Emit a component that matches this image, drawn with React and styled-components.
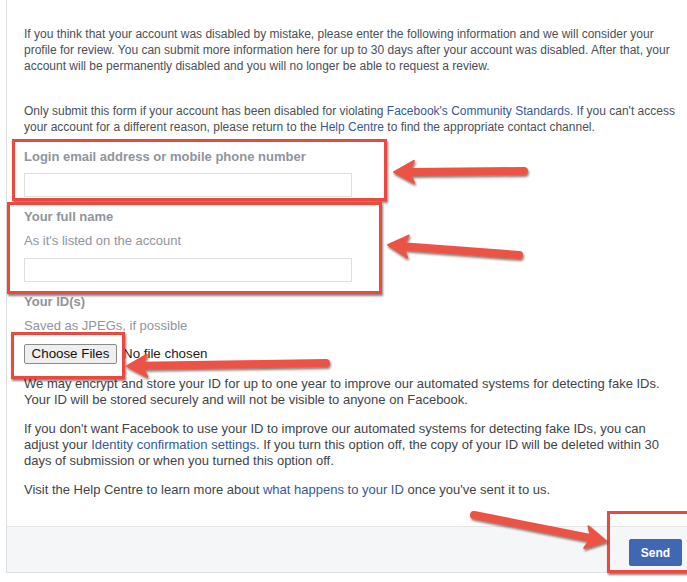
import React from 'react'
import styled, { createGlobalStyle } from 'styled-components'

const GlobalStyle = createGlobalStyle`
  html, body {
    margin: 0;
    padding: 0;
    background: #ffffff;
    overflow: hidden;
  }
  body {
    font-family: "Liberation Sans", Arial, sans-serif;
  }
`

const Page = styled.div`
  position: relative;
  width: 687px;
  height: 582px;
  overflow: hidden;
`

const Card = styled.div`
  margin-left: 6px;
  width: 720px;
  border-left: 1px solid #dddfe2;
  border-bottom: 1px solid #dddfe2;
  background: #fff;
`

const Body = styled.div`
  padding: 26px 17px 28px 17px;
  width: 660px;
  font-size: 12px;
  line-height: 16px;
  color: #4b4f56;
`

const Para = styled.p`
  margin: 0 0 ${p => p.$gap || 0}px 0;
  white-space: nowrap;
  font-size: ${p => p.$size || 12}px;
  color: ${p => (p.$size ? '#3f4349' : '#4b4f56')};
`

const Link = styled.a`
  color: #365899;
  text-decoration: none;
`

const Label = styled.div`
  font-size: 13px;
  font-weight: bold;
  color: #90949c;
  margin-top: ${p => p.$top || 0}px;
`

const Hint = styled.div`
  font-size: 13px;
  color: #90949c;
  margin-top: 8px;
`

const TextInput = styled.div`
  width: 326px;
  height: 22px;
  border: 1px solid #dddfe2;
  background: #fff;
  margin-top: ${p => p.$top || 8}px;
  margin-bottom: 12px;
`

const FileRow = styled.div`
  display: flex;
  align-items: center;
  gap: 6px;
  margin-top: 10px;
  margin-bottom: 12px;
  font-size: 13.33px;
  color: #1c1e21;
`

const FileButton = styled.div`
  height: 18px;
  width: 91px;
  border: 1px solid #8a8a8a;
  border-radius: 2px;
  background: #efefef;
  display: flex;
  align-items: center;
  justify-content: center;
  color: #111;
`

const Footer = styled.div`
  background: #f5f6f7;
  border-top: 1px solid #e5e5e5;
  padding: 12px 10px 6px 0;
  width: 675px;
  display: flex;
  justify-content: flex-end;
`

const SendButton = styled.div`
  width: 53px;
  height: 27px;
  background: #4267b2;
  border: 1px solid #4267b2;
  border-radius: 2px;
  color: #fff;
  font-size: 12px;
  font-weight: bold;
  display: flex;
  align-items: center;
  justify-content: center;
  box-sizing: border-box;
`

const RedBox = styled.div`
  position: absolute;
  left: ${p => p.$x}px;
  top: ${p => p.$y}px;
  width: ${p => p.$w}px;
  height: ${p => p.$h}px;
  border: 3px solid #e9493f;
  box-sizing: border-box;
  box-shadow: 1px 2px 2px rgba(60, 20, 20, 0.55);
  pointer-events: none;
`

const Overlay = styled.svg`
  position: absolute;
  left: 0;
  top: 0;
  width: 687px;
  height: 582px;
  pointer-events: none;
`

const Arrow = ({ x1, y1, x2, y2, head = 20, spread = 11, w = 8 }) => {
  const dx = x2 - x1
  const dy = y2 - y1
  const len = Math.sqrt(dx * dx + dy * dy)
  const ux = dx / len
  const uy = dy / len
  const nx = -uy
  const ny = ux
  const bx = x2 - ux * head
  const by = y2 - uy * head
  const mx = x2 - ux * (head - 5)
  const my = y2 - uy * (head - 5)
  const pts = [
    [x2, y2],
    [bx + nx * spread, by + ny * spread],
    [mx, my],
    [bx - nx * spread, by - ny * spread],
  ].map(p => p.join(',')).join(' ')
  return (
    <g filter="url(#shadow)">
      <line x1={x1} y1={y1} x2={mx} y2={my} stroke="#ec5346" strokeWidth={w} strokeLinecap="round" />
      <polygon points={pts} fill="#ec5346" strokeLinejoin="round" stroke="#ec5346" strokeWidth="2" />
    </g>
  )
}

export default function App() {
  return (
    <Page>
      <GlobalStyle />
      <Card>
        <Body>
          <Para $gap={29}>
            If you think that your account was disabled by mistake, please enter the following information and we will consider your<br />
            profile for review. You can submit more information here for up to 30 days after your account was disabled. After that, your<br />
            account will be permanently disabled and you will no longer be able to request a review.
          </Para>
          <Para>
            Only submit this form if your account has been disabled for violating <Link>Facebook's Community Standards</Link>. If you can't access<br />
            your account for a different reason, please return to the <Link>Help Centre</Link> to find the appropriate contact channel.
          </Para>

          <Label $top={14}>Login email address or mobile phone number</Label>
          <TextInput />

          <Label>Your full name</Label>
          <Hint>As it's listed on the account</Hint>
          <TextInput $top={9} />

          <Label>Your ID(s)</Label>
          <Hint>Saved as JPEGs, if possible</Hint>
          <FileRow>
            <FileButton>Choose Files</FileButton>
            <span>No file chosen</span>
          </FileRow>

          <Para $gap={13} $size={13}>
            We may encrypt and store your ID for up to one year to improve our automated systems for detecting fake IDs.<br />
            Your ID will be stored securely and will not be visible to anyone on Facebook.
          </Para>
          <Para $gap={13} $size={13}>
            If you don't want Facebook to use your ID to improve our automated systems for detecting fake IDs, you can<br />
            adjust your <Link>Identity confirmation settings</Link>. If you turn this option off, the copy of your ID will be deleted within 30<br />
            days of submission or when you turned this option off.
          </Para>
          <Para $size={13}>
            Visit the Help Centre to learn more about <Link>what happens to your ID</Link> once you've sent it to us.
          </Para>
        </Body>
        <Footer>
          <SendButton>Send</SendButton>
        </Footer>
      </Card>

      <RedBox $x={12} $y={139} $w={375} $h={62} />
      <RedBox $x={7} $y={202} $w={375} $h={92} />
      <RedBox $x={11} $y={332} $w={114} $h={47} />
      <RedBox $x={607} $y={511} $w={95} $h={62} />

      <Overlay>
        <defs>
          <filter id="shadow" x="-20%" y="-50%" width="140%" height="200%">
            <feDropShadow dx="1" dy="2" stdDeviation="1.2" floodColor="#4a1a14" floodOpacity="0.6" />
          </filter>
        </defs>
        <Arrow x1={524} y1={171} x2={394} y2={172} />
        <Arrow x1={519} y1={255} x2={388} y2={245} />
        <Arrow x1={326} y1={363} x2={127} y2={366} />
        <Arrow x1={474} y1={515} x2={606} y2={541} />
      </Overlay>
    </Page>
  )
}
